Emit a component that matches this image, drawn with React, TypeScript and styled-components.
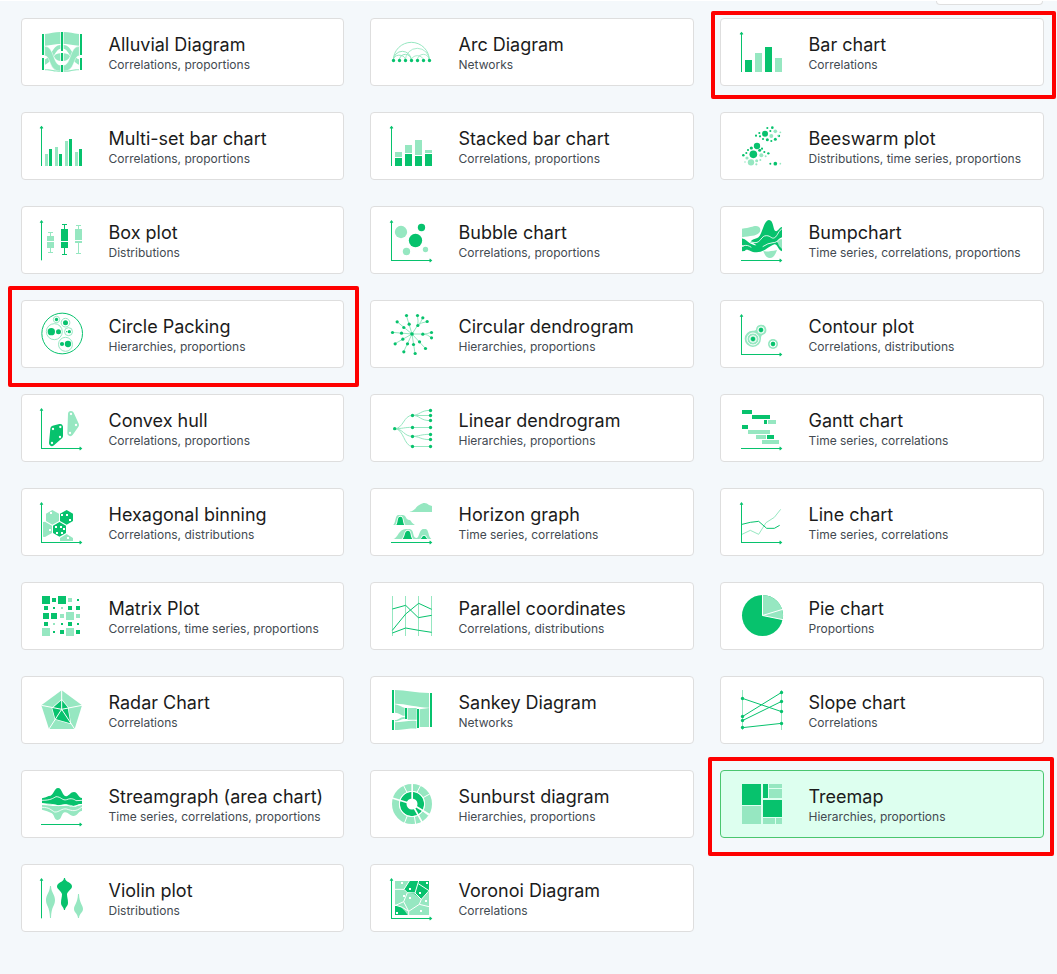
import React from "react";
import styled, { createGlobalStyle, css } from "styled-components";

const DARK = "#07c26d";
const LIGHT = "#96e7c1";

const GlobalStyle = createGlobalStyle`
  * { box-sizing: border-box; }
  body { margin: 0; background: #f4f8fb; font-family: Inter, "Liberation Sans", sans-serif; }
`;

const Page = styled.main`
  height: 974px;
  overflow: hidden;
  border-top: 1px solid #fff;
  background: #f4f8fb;
`;

const TopBar = styled.div`
  display: flex;
  justify-content: flex-end;
  height: 17px;
  padding-right: 14px;
`;

const FilterStub = styled.div`
  width: 107px;
  height: 4px;
  background: #fff;
  border: 1px solid #dfdfdf;
  border-top: 0;
  border-radius: 0 0 4px 4px;
`;

const Grid = styled.div`
  display: grid;
  grid-template-columns: repeat(3, 324px);
  grid-auto-rows: 68px;
  gap: 26px;
  padding-left: 20px;
`;

type Frame = { top: number; right: number; bottom: number; left: number };

const Card = styled.article<{ $selected?: boolean; $frame?: Frame }>`
  position: relative;
  display: flex;
  align-items: flex-start;
  padding: 9px 0 0 17px;
  background: ${(p) => (p.$selected ? "#ddffef" : "#fff")};
  border: 1px solid ${(p) => (p.$selected ? "#4ac66f" : "#dedede")};
  border-radius: 4px;

  &:nth-child(3n + 1) {
    margin-left: 1px;
    padding-left: 16px;
  }

  ${(p) =>
    p.$frame &&
    css`
      &::after {
        content: "";
        position: absolute;
        top: ${-p.$frame.top - 1}px;
        right: ${-p.$frame.right - 1}px;
        bottom: ${-p.$frame.bottom - 1}px;
        left: ${-p.$frame.left - 1}px;
        border: 4px solid #fe0000;
        border-radius: 2px;
      }
    `}
`;

const Glyph = styled.svg`
  flex: none;
  width: 50px;
  height: 48px;
  margin-right: 20.5px;
  overflow: visible;
`;

const Labels = styled.div`
  padding-top: 4px;
  white-space: nowrap;
`;

const Title = styled.h2`
  margin: 0;
  font-size: 18px;
  font-weight: 400;
  line-height: 25px;
  color: #1b1b1b;
`;

const Tags = styled.p`
  margin: 0;
  font-size: 12px;
  line-height: 16px;
  color: #434a51;
`;

/* Icons are drawn at three units per pixel. */
const Icon = ({ x = 84, y, children }: { x?: number; y: number; children: React.ReactNode }) => (
  <Glyph viewBox={`${x} ${y} 150 144`}>{children}</Glyph>
);

const AxisY = ({ x = 94.5, y }: { x?: number; y: number }) => (
  <g fill={DARK}>
    <rect x={x - 1.5} y={y + 2} width="3" height="118" />
    <path d={`M${x} ${y - 1}l5 6.500v2h-10v-2z`} />
  </g>
);

const AxisX = ({ y }: { y: number }) => (
  <g fill={DARK}>
    <rect x="93" y={y} width="120" height="3" />
    <path d={`M217 ${y + 1.5}l-6.500 -5h-2v10h2z`} />
  </g>
);

type R = [number, number, number, number];
const Rects = ({ items, fill = DARK }: { items: R[]; fill?: string }) => (
  <g fill={fill}>
    {items.map(([x, y, w, h], i) => (
      <rect key={i} x={x} y={y} width={w} height={h} />
    ))}
  </g>
);

type C = [number, number, number];
const Dots = ({ items, fill = DARK }: { items: C[]; fill?: string }) => (
  <g fill={fill}>
    {items.map(([x, y, r], i) => (
      <circle key={i} cx={x} cy={y} r={r} />
    ))}
  </g>
);

const Alluvial = () => (
  <Icon y={84}>
    {[false, true].map((flip) => (
      <g key={String(flip)} fill={LIGHT} transform={flip ? "translate(312 0) scale(-1 1)" : undefined}>
        <path d="M105 102C122 101 133 96 151 96V132C132 132 124 136 105 137Z" />
        <path d="M151 160V183C141 183 133 175 132 169C136 162 143 160 151 160Z" />
        <path d="M105 178C122 174 128 135 151 135V146C136 147 130 184 105 194Z" />
        <path d="M104 139C134 139 128 196 152 196V214C114 213 124 168 104 167Z" stroke="#fff" strokeWidth="1.500" />
        <path d="M105 208C122 207 130 211 151 214V216C132 216 122 211 105 211Z" />
      </g>
    ))}
    <Rects items={[[96, 102, 6, 63], [96, 174, 6, 36], [153, 96, 6, 57], [153, 159, 6, 24], [153, 195, 6, 21], [210, 102, 6, 63], [210, 174, 6, 36]]} />
  </Icon>
);

const Arc = () => (
  <Icon y={84}>
    <g fill="none" stroke={LIGHT} strokeWidth="3">
      <path d="M100 181A54 54 0 0 1 208 181" />
      <path d="M100 181A27 27 0 0 1 154 181M100 181A18 14 0 0 1 136 178" />
      <path d="M136 181A36 36 0 0 1 208 181M172 181A18 18 0 0 1 208 181M154 181A18 14 0 0 1 190 181" opacity=".8" />
      <path d="M118 181A18 18 0 0 1 154 181" />
    </g>
    <Dots items={[100, 118, 136, 154, 172, 190, 208].map((x) => [x + 0.5, 181.5, 5] as C)} />
  </Icon>
);

const Bars = () => (
  <Icon x={114} y={84}>
    <AxisY x={124.5} y={96} />
    <Rects items={[[135, 180, 21, 36], [195, 141, 21, 75]]} />
    <Rects fill={LIGHT} items={[[165, 159, 21, 57], [225, 174, 21, 42]]} />
  </Icon>
);

const MultiBars = () => (
  <Icon y={366}>
    <AxisY y={378} />
    <Rects fill={LIGHT} items={[[105, 462, 9, 36], [135, 441, 9, 57], [165, 423, 9, 75], [195, 456, 9, 42]]} />
    <Rects items={[[117, 447, 9, 51], [147, 462, 9, 36], [177, 417, 9, 81], [207, 447, 9, 51]]} />
  </Icon>
);

const StackedBars = () => (
  <Icon y={366}>
    <AxisY y={378} />
    <Rects fill={LIGHT} items={[[105, 456, 21, 15], [135, 435, 21, 24], [165, 420, 21, 45], [195, 450, 21, 9]]} />
    <Rects items={[[105, 474, 21, 24], [135, 462, 21, 36], [165, 468, 21, 30], [195, 462, 21, 36]]} />
  </Icon>
);

const Beeswarm = () => (
  <Icon x={114} y={366}>
    <Dots items={[[195, 401, 9], [171, 438, 9.5], [160, 463, 11.5], [226, 491, 5.5], [217, 383, 4], [202, 384, 3.2], [211, 393, 3.2], [178, 399, 3.2], [168, 407, 3.2], [180, 409, 3.2], [189, 417, 3.2], [202, 419, 4.5], [214, 423, 3.2], [226, 418, 4.5], [237, 408, 3.4], [154, 444, 4.8], [144, 450, 3.2], [139, 459, 3.2], [130, 466, 3.8], [186, 446, 3.2], [179, 451, 4.5], [193, 456, 3.2], [205, 460, 3.6], [211, 491, 3]]} />
    <Dots fill={LIGHT} items={[[226, 394, 5.5], [214, 408, 6], [241, 397, 2.8], [234, 407, 2.5], [153, 487, 9.5], [184, 466, 6], [141, 474, 4.8], [170, 482, 4.5], [181, 480, 3], [197, 469, 3], [169, 493, 3.3], [135, 486, 2.4], [241, 491, 2.5]]} />
  </Icon>
);

const Box = ({ x, top, y1, mid, y2, end, fill }: { x: number; top: number; y1: number; mid: number; y2: number; end: number; fill: string }) => (
  <g>
    <path d={`M${x - 7.5} ${top}h15M${x - 7.5} ${end}h15M${x} ${top}V${end}`} stroke={fill} strokeWidth="3" />
    <rect x={x - 10.5} y={y1} width="21" height={y2 - y1} fill={fill} />
    <rect x={x - 10.5} y={mid} width="21" height="3" fill="#fff" />
  </g>
);

const BoxPlot = () => (
  <Icon x={114} y={78}>
    <AxisY x={124.5} y={91} />
    <Box x={151.5} top={127.5} y1={138} mid={153} y2={174} end={187.5} fill={LIGHT} />
    <Box x={193.5} top={103.5} y1={117} mid={153} y2={174} end={193.5} fill={DARK} />
    <Box x={235.5} top={106.5} y1={117} mid={150} y2={159} end={190.5} fill={LIGHT} />
  </Icon>
);

const Bubble = () => (
  <Icon y={78}>
    <AxisY y={91} />
    <AxisX y={210} />
    <Dots fill={LIGHT} items={[[123, 126, 18.5], [139.5, 184.5, 11], [196.5, 178.5, 8]]} />
    <Dots items={[[166.5, 151.5, 20], [184.5, 112.5, 11]]} />
  </Icon>
);

const Bump = () => (
  <Icon y={78}>
    <path fill={LIGHT} d="M96 116C119 114 129 108 138 108C151 108 155 122 147 129C137 139 121 137 96 142Z" />
    <path fill={LIGHT} d="M160 183Q169 187 201 180C196 194 190 204 180 204C170 204 164 195 160 183ZM205 151Q212 145 216 148V181Q205 174 203 162Z" />
    <path fill={DARK} d="M120 157C133 139 143 154 153 130C161 110 166 90 177 90C191 90 189 119 196 123C204 126 207 112 216 111V142C202 146 201 166 184 164C168 162 159 164 151 168C140 172 135 157 120 157Z" />
    <path fill={DARK} d="M96 145C110 147 115 162 132 165C151 169 150 150 166 146C182 143 192 151 202 155Q205 168 216 177V184C202 178 203 161 192 163C174 171 161 187 140 187C121 187 119 178 108 179Q106 184 96 184V170Q99 169 103 169L96 166Z" />
    <path fill="none" stroke="#fff" strokeWidth="2.600" d="M96 143C113 145 121 159 135 158C153 158 153 137 169 137C183 137 184 148 194 143C203 138 206 119 218 116M96 168C111 164 116 167 124 172M158 170Q174 159 189 158C205 158 203 144 218 146" />
    <AxisX y={210} />
  </Icon>
);

const CirclePack = () => (
  <Icon x={114} y={360}>
    <circle cx="186.500" cy="430.500" r="61" fill="none" stroke={DARK} strokeWidth="3" />
    <g fill="none" stroke={LIGHT} strokeWidth="3">
      <circle cx="163" cy="425" r="24" />
      <circle cx="169.500" cy="388.500" r="9.500" />
      <circle cx="196.500" cy="398" r="13" />
      <circle cx="205.500" cy="425" r="12" />
      <circle cx="196.500" cy="463" r="21" />
    </g>
    <Dots items={[[154, 425, 11], [175.5, 425, 7.5], [169.5, 388.5, 5], [196.5, 398, 7.5], [208, 425, 5], [200, 425, 2], [204, 462, 9.5], [186, 462, 6.3]]} />
  </Icon>
);

const CircularDendro = () => {
  const inner = [[147, 402], [173, 406], [131, 412], [124, 429], [188, 432], [128, 447], [142, 461], [160, 463], [178, 455]];
  const spokes = [[139, 376], [111, 395], [97, 427], [105, 461], [131, 485], [165, 490], [196, 475]];
  const twigs = [[172, 376], [188, 383], [201, 394], [214, 427], [214, 443]];
  const all = [...inner, ...spokes, ...twigs].map(([x, y]) => [x + 0.5, y + 0.5, 4.8] as C);
  return (
    <Icon y={360}>
      <g stroke={LIGHT} strokeWidth="3" fill="none">
        {[...spokes, [173, 406], [188, 432]].map(([x, y], i) => (
          <path key={i} d={`M156 432L${x} ${y}`} />
        ))}
        <path d="M173 406Q176 394 172 376M173 406Q184 397 188 383M173 406Q184 397 201 395M188 432Q202 432 214 427M188 432Q202 432 214 443" />
      </g>
      <Dots items={[[156, 432, 5.5], ...all]} />
    </Icon>
  );
};

const Contour = () => (
  <Icon y={360}>
    <AxisY y={373} />
    <AxisX y={492} />
    <path fill={LIGHT} d="M138 419A15.500 15.500 0 1 1 159 434Q152 436 153 446A24.500 24.500 0 1 1 129 422Q135 423 138 419Z" />
    <circle cx="189" cy="462" r="15" fill={LIGHT} />
    <g fill="none" stroke="#fff" strokeWidth="3">
      <circle cx="129" cy="447" r="18" />
      <circle cx="129" cy="447" r="10" />
      <circle cx="153" cy="420" r="9.500" />
      <circle cx="189" cy="462" r="9" />
    </g>
    <Dots items={[[129, 447, 6.5], [153, 420, 6.5], [189, 462, 6.5]]} />
  </Icon>
);

const Hull = () => (
  <Icon y={72}>
    <AxisY y={85} />
    <AxisX y={204} />
    <g strokeLinejoin="round" strokeWidth="18">
      <path d="M130 146L150 141V168L126 189Z" fill={DARK} stroke={DARK} />
      <path d="M183 102L198 135L181 159Z" fill={LIGHT} stroke={LIGHT} />
    </g>
    <Dots fill="#fff" items={[[129, 147, 3.5], [151, 141, 3.5], [150, 171, 3.5], [126, 189, 3.5], [183, 102, 3.5], [198, 135, 3.5], [180, 159, 3.5]]} />
  </Icon>
);

const LinearDendro = () => (
  <Icon y={72}>
    <g fill="none" stroke={LIGHT} strokeWidth="3">
      <path d="M104 146C130 146 131 106 157 106M104 146C130 146 131 142 157 142M104 146C130 146 131 169 157 169M104 146C132 146 131 199 157 199" />
      <path d="M157 106C180 106 180 91 211 91M157 106.500H211M157 106C180 106 180 122 211 122M157 142.500H211M157 169C180 169 180 163 211 163M157 169C180 169 180 179 211 179M157 199.500H211" />
    </g>
    <Dots items={[[104, 146, 5], [157.5, 106.5, 5], [157.5, 142.5, 5], [157.5, 169.5, 5], [157.5, 199.5, 5], ...[91.5, 106.5, 121.5, 142.5, 163.5, 178.5, 199.5].map((y) => [211.5, y, 5] as C)]} />
  </Icon>
);

const Gantt = () => (
  <Icon y={72}>
    <Rects items={[[96, 90, 30, 12], [126, 105, 54, 12], [162, 120, 9, 12], [96, 135, 18, 12], [171, 165, 21, 12]]} />
    <Rects fill={LIGHT} items={[[174, 120, 24, 12], [114, 150, 66, 12], [138, 165, 30, 12], [156, 180, 51, 12]]} />
    <AxisX y={204} />
  </Icon>
);

const Hexbin = () => (
  <Icon y={354}>
    <AxisY y={367} />
    <AxisX y={486} />
    <path fill={LIGHT} d="M127 390L147 401V423L127 434L108 423V401ZM99 426L105 425L126 437V459L105 471L99 470ZM150 483V474L170 462L189 474V483Z" />
    <path fill={DARK} d="M170 390L189 401V423L170 434L150 423V401ZM148.500 426L168 437V459L148.500 470L129 459V437Z" />
    <Rects fill="#fff" items={[[120, 396, 6, 6], [168, 402, 6, 6], [153, 402, 6, 6], [177, 417, 6, 6], [135, 438, 6, 6], [150, 438, 6, 6], [159, 444, 6, 6], [138, 456, 6, 6], [153, 456, 6, 6], [117, 447, 6, 6], [171, 471, 6, 6]]} />
  </Icon>
);

const Horizon = () => (
  <Icon y={354}>
    <path fill={LIGHT} d="M149 395C166 393 168 378 179 374C190 367 199 367 207 375L216 378V396H149ZM99 435C108 431 104 405 116 405H127C141 405 134 419 149 420C154 422 154 429 164 434V435ZM100 477C112 476 117 447 137 447H148C164 447 156 474 169 474C178 474 176 453 188 447H197C207 450 204 469 214 477Z" />
    <g stroke="#fff" strokeWidth="5" paintOrder="stroke" fill={DARK}>
      <path d="M109 435C115 425 111 410 121 410C131 410 127 425 133 435Z" />
      <path d="M128 477C136 468 133 452 144 452C154 452 150 468 157 477Z" />
      <path d="M180 477Q185 476 187 470Q192 465 197 470Q199 476 204 477Z" />
    </g>
    <AxisX y={486} />
  </Icon>
);

const Lines = () => (
  <Icon y={354}>
    <path fill="none" stroke={LIGHT} strokeWidth="3" d="M96 463L121 451L146 463L168 428L193 412L212 388" />
    <path fill="none" stroke={DARK} strokeWidth="3" d="M96 433L121 427L146 424L170 445H193L209 436" />
    <AxisY y={367} />
    <AxisX y={486} />
  </Icon>
);

const Matrix = () => (
  <Icon y={636}>
    <Rects items={[[96, 648, 24, 24], [126, 654, 12, 12], [144, 648, 24, 24], [201, 657, 6, 6], [102, 678, 12, 12], [129, 681, 6, 6], [174, 678, 12, 12], [198, 678, 12, 12], [99, 699, 18, 18], [123, 699, 18, 18], [102, 726, 12, 12], [153, 729, 6, 6], [174, 726, 12, 12], [201, 729, 6, 6], [129, 753, 6, 6], [150, 750, 12, 12], [198, 750, 12, 12]]} />
    <Rects fill={LIGHT} items={[[174, 654, 12, 12], [153, 681, 6, 6], [150, 702, 12, 12], [168, 696, 24, 24], [198, 702, 12, 12], [129, 729, 6, 6], [96, 744, 24, 24], [168, 744, 24, 24]]} />
  </Icon>
);

const Parallel = () => (
  <Icon y={636}>
    <path stroke={LIGHT} strokeWidth="3" d="M97.500 648V768M136.500 648V768M175.500 648V768M214.500 648V768" />
    <path fill="none" stroke={DARK} strokeWidth="3" d="M97 687L137 676L175 713L215 706M97 751L137 702L176 670L215 688M97 759L137 744L176 751L215 757" />
  </Icon>
);

const Pie = () => (
  <Icon y={636}>
    <circle cx="157.500" cy="706.500" r="61.500" fill={DARK} />
    <path fill={LIGHT} d="M157.500 706.500V645A61.500 61.500 0 0 1 218 719Z" />
    <path fill="none" stroke="#fff" strokeWidth="3" d="M157.500 644V706.500L219 719M157.500 706.500L218 688" />
  </Icon>
);

const Radar = () => (
  <Icon y={78}>
    <path fill={LIGHT} d="M155 91L216 136L194 207H117L94 136Z" />
    <path fill={DARK} stroke="#fff" strokeWidth="4" paintOrder="stroke" d="M155 120L173 142L181 190L136 177L127 145Z" />
    <path fill="none" stroke="#fff" strokeWidth="3" d="M155 90V151M94 136L155 148L216 136M155 148L117 207M155 148L194 207" />
  </Icon>
);

const Sankey = () => (
  <Icon y={78}>
    <path fill={LIGHT} d="M105 90C138 90 166 99 207 99V143C171 142 137 131 105 131ZM105 133C121 136 126 143 134 143V167C123 168 119 158 105 158ZM143 144H170V179H143ZM179 148L207 144V201H179ZM105 180C119 180 119 170 134 171V177C121 177 119 184 105 184ZM105 187C128 187 146 181 169 183V206C145 204 132 210 105 210Z" />
    <Rects items={[[96, 90, 6, 69], [96, 180, 6, 30], [135, 144, 6, 33], [171, 147, 6, 57], [210, 99, 6, 102]]} />
  </Icon>
);

const Slope = () => (
  <Icon x={114} y={78}>
    <path stroke={LIGHT} strokeWidth="3" d="M127.500 90V210M244.500 90V210" />
    <path stroke={DARK} strokeWidth="3" d="M127 115L245 155M127 170L245 97M127 182L245 124M127 203L245 190" />
    <Dots items={[[127.5, 115.5, 5], [127.5, 169.5, 5], [127.5, 181.5, 5], [127.5, 202.5, 5], [244.5, 97.5, 5], [244.5, 124.5, 5], [244.5, 154.5, 5], [244.5, 190.5, 5]]} />
  </Icon>
);

const Stream = () => (
  <Icon y={360}>
    <path fill={DARK} d="M96 415Q109 412 116 408C131 409 132 384 144 384C157 384 156 409 169 409C178 407 181 396 192 396C204 396 204 414 216 414V432C201 431 202 439 189 439C177 439 174 432 164 433Q153 436 144 436Q135 433 126 434Q116 434 96 429Z" />
    <path fill={LIGHT} d="M96 435Q121 436 128 438H162C179 435 179 442 194 441Q204 436 216 435V453C206 452 203 468 190 468C179 468 175 456 164 457C153 459 156 480 143 480C131 480 134 460 122 458Q114 454 96 449Z" />
    <path fill="none" stroke="#fff" strokeWidth="2.600" d="M96 421C121 421 129 415 138 410C154 410 157 423 170 419C184 413 193 418 198 422L216 421M96 442C119 442 122 450 134 456C148 457 155 444 170 447C187 453 197 456 216 441M96 431Q126 432 145 437Q174 432 190 439Q204 435 216 433" />
    <AxisX y={492} />
  </Icon>
);

const Sunburst = () => (
  <Icon y={360}>
    <circle cx="156" cy="432" r="49.500" fill="none" stroke={LIGHT} strokeWidth="21" />
    <circle cx="156" cy="432" r="26.500" fill="none" stroke={DARK} strokeWidth="20" />
    <path fill="none" stroke="#fff" strokeWidth="5" d="M156.500 432V370M156 432L96 414M156 432L209 464M156 432L187 488" />
    <path fill="none" stroke="#fff" strokeWidth="3" d="M130 375L141 397M182 376L171 397M209 402L189 413M133 490L142 467M167 493L163 468M205 466L188 452" />
    <circle cx="156" cy="432" r="38" fill="none" stroke="#fff" strokeWidth="2.500" />
  </Icon>
);

const Treemap = () => (
  <Icon x={114} y={360}>
    <Rects items={[[126, 372, 57, 63], [189, 372, 15, 42], [189, 420, 57, 51]]} />
    <Rects fill={LIGHT} items={[[207, 372, 39, 12], [207, 387, 39, 27], [126, 438, 57, 54], [189, 474, 36, 18], [228, 474, 18, 18]]} />
  </Icon>
);

const Violin = () => (
  <Icon y={642}>
    <AxisY y={655} />
    <path fill={LIGHT} d="M120 678H123C124 699 135 704 135 720C135 738 124 738 123 774H120C119 738 108 738 108 720C108 704 119 699 120 678ZM204 702H207C208 730 219 735 219 747C219 758 208 760 207 774H204C203 760 192 758 192 747C192 735 203 730 204 702Z" />
    <path fill={DARK} d="M162 654H165Q166 663 176 667Q186 672 186 680C186 687 172 693 171 703C171 712 174 717 174 728C174 740 166 739 165 750H162C161 739 153 740 153 728C153 717 156 712 156 703C155 693 141 687 141 680Q141 672 151 667Q161 663 162 654Z" />
  </Icon>
);

const Voronoi = () => (
  <Icon y={642}>
    <AxisY y={655} />
    <AxisX y={774} />
    <rect x="105" y="663" width="102" height="102" fill={LIGHT} />
    <path fill={DARK} d="M148 663H207V694L184 717L165 703L142 698L132 688ZM105 735Q124 735 143 765H105Z" />
    <path fill="none" stroke="#fff" strokeWidth="3" d="M105 688H132L148 663M132 688L142 698L131 725L105 737M142 698L165 699L184 718L207 692M165 699L176 663M175 671L207 692M131 725L146 754L178 733L184 718M178 733L207 740M105 735Q128 739 146 754V765" />
    <Rects fill="#fff" items={[[123, 666, 6, 6], [147, 684, 6, 6], [198, 666, 6, 6], [177, 696, 6, 6], [129, 705, 6, 6], [147, 711, 6, 6], [195, 720, 6, 6], [180, 750, 6, 6], [108, 756, 6, 6]]} />
  </Icon>
);

type Chart = { name: string; tags: string; icon: React.ComponentType; selected?: boolean; frame?: Frame };

const charts: Chart[] = [
  { name: "Alluvial Diagram", tags: "Correlations, proportions", icon: Alluvial },
  { name: "Arc Diagram", tags: "Networks", icon: Arc },
  { name: "Bar chart", tags: "Correlations", icon: Bars, frame: { top: 7, right: 12, bottom: 13, left: 9 } },
  { name: "Multi-set bar chart", tags: "Correlations, proportions", icon: MultiBars },
  { name: "Stacked bar chart", tags: "Correlations, proportions", icon: StackedBars },
  { name: "Beeswarm plot", tags: "Distributions, time series, proportions", icon: Beeswarm },
  { name: "Box plot", tags: "Distributions", icon: BoxPlot },
  { name: "Bubble chart", tags: "Correlations, proportions", icon: Bubble },
  { name: "Bumpchart", tags: "Time series, correlations, proportions", icon: Bump },
  { name: "Circle Packing", tags: "Hierarchies, proportions", icon: CirclePack, frame: { top: 14, right: 15, bottom: 19, left: 13 } },
  { name: "Circular dendrogram", tags: "Hierarchies, proportions", icon: CircularDendro },
  { name: "Contour plot", tags: "Correlations, distributions", icon: Contour },
  { name: "Convex hull", tags: "Correlations, proportions", icon: Hull },
  { name: "Linear dendrogram", tags: "Hierarchies, proportions", icon: LinearDendro },
  { name: "Gantt chart", tags: "Time series, correlations", icon: Gantt },
  { name: "Hexagonal binning", tags: "Correlations, distributions", icon: Hexbin },
  { name: "Horizon graph", tags: "Time series, correlations", icon: Horizon },
  { name: "Line chart", tags: "Time series, correlations", icon: Lines },
  { name: "Matrix Plot", tags: "Correlations, time series, proportions", icon: Matrix },
  { name: "Parallel coordinates", tags: "Correlations, distributions", icon: Parallel },
  { name: "Pie chart", tags: "Proportions", icon: Pie },
  { name: "Radar Chart", tags: "Correlations", icon: Radar },
  { name: "Sankey Diagram", tags: "Networks", icon: Sankey },
  { name: "Slope chart", tags: "Correlations", icon: Slope },
  { name: "Streamgraph (area chart)", tags: "Time series, correlations, proportions", icon: Stream },
  { name: "Sunburst diagram", tags: "Hierarchies, proportions", icon: Sunburst },
  { name: "Treemap", tags: "Hierarchies, proportions", icon: Treemap, selected: true, frame: { top: 13, right: 10, bottom: 18, left: 12 } },
  { name: "Violin plot", tags: "Distributions", icon: Violin },
  { name: "Voronoi Diagram", tags: "Correlations", icon: Voronoi },
];

export default function App() {
  return (
    <>
      <GlobalStyle />
      <Page>
        <TopBar>
          <FilterStub />
        </TopBar>
        <Grid>
          {charts.map(({ name, tags, icon: ChartIcon, selected, frame }) => (
            <Card key={name} $selected={selected} $frame={frame}>
              <ChartIcon />
              <Labels>
                <Title>{name}</Title>
                <Tags>{tags}</Tags>
              </Labels>
            </Card>
          ))}
        </Grid>
      </Page>
    </>
  );
}
